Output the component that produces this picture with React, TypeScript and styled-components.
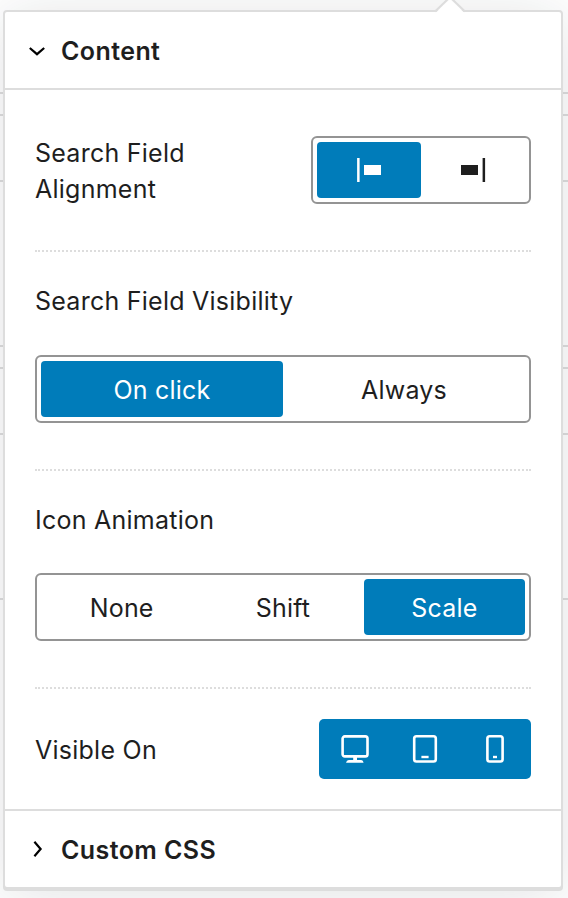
import React from 'react';
import styled, { createGlobalStyle } from 'styled-components';

const BLUE = '#007cba';
const INK = '#1e1e1e';
const LINE = '#dddddd';

const GlobalStyle = createGlobalStyle`
  *, *::before, *::after { box-sizing: border-box; }
  html { overflow: hidden; }
  body {
    margin: 0;
    background: #fff;
    color: ${INK};
    font-family: Inter, "Liberation Sans", sans-serif;
    font-size: 25px;
    line-height: 36px;
  }
  button { font: inherit; color: inherit; background: none; border: 0; padding: 0; margin: 0; }
`;

const Page = styled.main`
  position: relative;
  width: 568px;
  height: 898px;
  padding: 10px 5px 0 3px;
  overflow: hidden;
`;

const Backdrop = styled.div`
  position: absolute;
  inset: 92px 0 0;
`;

const BackdropBlock = styled.div<{ $height: number; $gap: number }>`
  height: ${p => p.$height}px;
  margin-bottom: ${p => p.$gap}px;
  border-top: 2px solid ${LINE};
  border-bottom: 2px solid ${LINE};
`;

const Popover = styled.section`
  position: relative;
  width: 560px;
  height: 879px;
  border: 2px solid ${LINE};
  border-radius: 4px;
  background: #fff;
  box-shadow: 0 2px 0 ${LINE}, 0 6px 60px rgba(25, 30, 35, 0.13);
`;

const Arrow = styled.svg`
  position: absolute;
  left: 429px;
  top: -12px;
`;

const PanelHeader = styled.button<{ $closed?: boolean }>`
  display: flex;
  align-items: center;
  width: 100%;
  height: 78px;
  padding-left: 22px;
  gap: 14px;
  font-weight: 600;
  text-align: left;
  border-style: solid;
  border-color: ${LINE};
  border-width: ${p => (p.$closed ? '2px 0 0' : '0 0 2px')};
`;

const PanelTitle = styled.span`
  padding-top: 2px;
  letter-spacing: 0.42px;
`;

const PanelBody = styled.div`
  padding: 0 30px;
`;

const Field = styled.div<{ $height: number; $stacked?: boolean; $gap?: number }>`
  display: flex;
  flex-direction: ${p => (p.$stacked ? 'column' : 'row')};
  align-items: ${p => (p.$stacked ? 'stretch' : 'center')};
  justify-content: ${p => (p.$stacked ? 'flex-start' : 'space-between')};
  gap: ${p => p.$gap ?? 0}px;
  height: ${p => p.$height}px;
  padding-top: ${p => (p.$stacked ? 31 : 0)}px;
`;

const Divider = styled.div`
  height: 2px;
  border-top: 2px dotted ${LINE};
`;

const Label = styled.label<{ $width?: number; $inline?: boolean }>`
  width: ${p => (p.$width ? `${p.$width}px` : 'auto')};
  padding-top: ${p => (p.$inline ? 2 : 0)}px;
  letter-spacing: 0.25px;
`;

const Segments = styled.div<{ $width?: number }>`
  display: flex;
  flex: none;
  width: ${p => (p.$width ? `${p.$width}px` : 'auto')};
  height: 68px;
  padding: 4px;
  border: 2px solid #949494;
  border-radius: 6px;
`;

const Segment = styled.button<{ $active?: boolean; $icon?: boolean }>`
  display: flex;
  flex: 1 1 0;
  align-items: center;
  justify-content: center;
  padding-top: ${p => (p.$icon ? 0 : 2)}px;
  border-radius: 4px;
  letter-spacing: 0.2px;
  color: ${p => (p.$active ? '#fff' : INK)};
  background: ${p => (p.$active ? BLUE : 'transparent')};
`;

const Devices = styled.div`
  display: flex;
  width: 212px;
  height: 60px;
  padding: 0 1px;
  border-radius: 5px;
  background: ${BLUE};
  color: #fff;
`;

const Device = styled.button`
  display: flex;
  flex: 1;
  align-items: center;
  justify-content: center;
`;

const Chevron = ({ open }: { open?: boolean }) => (
  <svg width="20" height="20" viewBox="0 0 20 20" fill="none" stroke="#000" strokeWidth="2.2">
    <path d={open ? 'M2.8 8 10 14.2 17.2 8' : 'M7.4 2.8 13.6 10 7.4 17.2'} />
  </svg>
);

const AlignIcon = ({ right }: { right?: boolean }) => (
  <svg width="32" height="24" viewBox="0 0 32 24" fill="currentColor">
    <rect x={right ? 25.6 : 4.1} width="2.5" height="24" />
    <rect x={right ? 4 : 11} y="7" width="17" height="10" />
  </svg>
);

const DesktopIcon = () => (
  <svg width="28" height="28" viewBox="0 0 28 28" fill="none">
    <rect x="1.6" y="1.4" width="24.9" height="20" rx="2.2" stroke="currentColor" strokeWidth="2.6" />
    <path d="M12.2 22h3.8v3h4.2q2 0 2.4 2.8H5Q5.6 25 7.8 25h4.4z" fill="currentColor" />
  </svg>
);

const TabletIcon = () => (
  <svg width="28" height="28" viewBox="0 0 28 28" fill="none">
    <rect x="3.2" y="1.3" width="21.6" height="25.2" rx="2.3" stroke="currentColor" strokeWidth="2.6" />
    <rect x="10.4" y="20.8" width="7.2" height="2.4" fill="currentColor" />
  </svg>
);

const PhoneIcon = () => (
  <svg width="28" height="28" viewBox="0 0 28 28" fill="none">
    <rect x="6.4" y="1.3" width="15.2" height="25.2" rx="2.3" stroke="currentColor" strokeWidth="2.6" />
    <rect x="12" y="20.8" width="4" height="2.4" fill="currentColor" />
  </svg>
);

export default function App() {
  return (
    <>
      <GlobalStyle />
      <Page>
        <Backdrop>
          <BackdropBlock $height={24} $gap={64} />
          <BackdropBlock $height={167} $gap={20} />
          <BackdropBlock $height={68} $gap={163} />
          <BackdropBlock $height={400} $gap={0} />
        </Backdrop>
        <Popover>
          <Arrow width="32" height="14" viewBox="0 0 32 14">
            <path d="M2 14V12.5L16 -1 30 12.5V14z" fill="#fff" />
            <path d="M1 12.5 16 -1.9 31 12.5" transform="translate(0 -1)" fill="none" stroke={LINE} strokeWidth="2" />
          </Arrow>
          <PanelHeader>
            <Chevron open />
            <PanelTitle>Content</PanelTitle>
          </PanelHeader>
          <PanelBody>
            <Field $height={160}>
              <Label $width={220} $inline>Search Field Alignment</Label>
              <Segments $width={220}>
                <Segment $icon $active aria-label="Left"><AlignIcon /></Segment>
                <Segment $icon aria-label="Right"><AlignIcon right /></Segment>
              </Segments>
            </Field>
            <Divider />
            <Field $height={217} $stacked $gap={36}>
              <Label>Search Field Visibility</Label>
              <Segments>
                <Segment $active>On click</Segment>
                <Segment>Always</Segment>
              </Segments>
            </Field>
            <Divider />
            <Field $height={216} $stacked $gap={35}>
              <Label>Icon Animation</Label>
              <Segments>
                <Segment>None</Segment>
                <Segment>Shift</Segment>
                <Segment $active>Scale</Segment>
              </Segments>
            </Field>
            <Divider />
            <Field $height={120}>
              <Label $inline>Visible On</Label>
              <Devices>
                <Device aria-label="Desktop"><DesktopIcon /></Device>
                <Device aria-label="Tablet"><TabletIcon /></Device>
                <Device aria-label="Mobile"><PhoneIcon /></Device>
              </Devices>
            </Field>
          </PanelBody>
          <PanelHeader $closed>
            <Chevron />
            <PanelTitle>Custom CSS</PanelTitle>
          </PanelHeader>
        </Popover>
      </Page>
    </>
  );
}
